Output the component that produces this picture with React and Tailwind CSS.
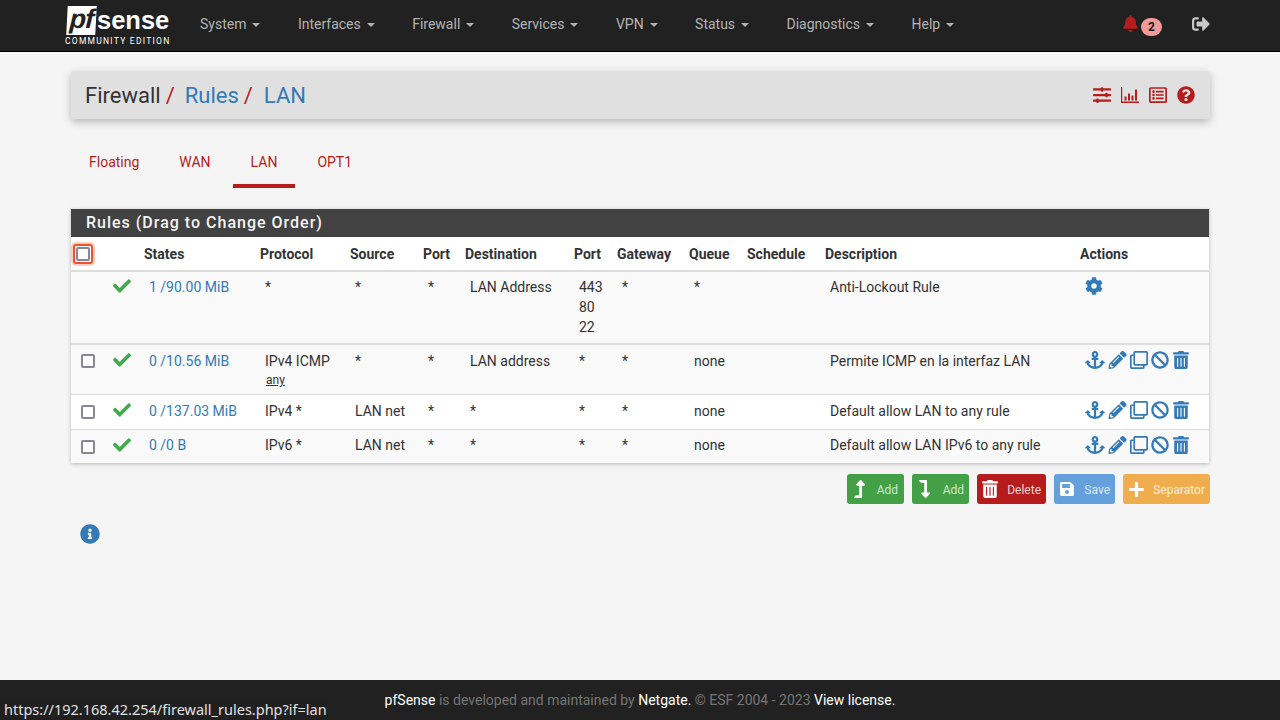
import React from 'react';
import {
  FaAnchor, FaBan, FaBell, FaCheck, FaCog, FaInfoCircle, FaLevelDownAlt, FaLevelUpAlt,
  FaPencilAlt, FaPlus, FaQuestionCircle, FaRegClone, FaRegListAlt, FaSave, FaSignOutAlt,
  FaSlidersH, FaTrashAlt,
} from 'react-icons/fa';

const menu = ['System', 'Interfaces', 'Firewall', 'Services', 'VPN', 'Status', 'Diagnostics', 'Help'];

const headers = ['', '', 'States', 'Protocol', 'Source', 'Port', 'Destination', 'Port', 'Gateway', 'Queue', 'Schedule', 'Description', 'Actions'];

const rows = [
  { states: '0 /10.56 MiB', proto: 'IPv4 ICMP', sub: 'any', src: '*', dest: 'LAN address', desc: 'Permite ICMP en la interfaz LAN', cls: 'h-[50px] bg-[#f9f9f9] border-b border-[#ddd] [&_td]:pt-[6px]', box: 'mt-[3px]', icons: '' },
  { states: '0 /137.03 MiB', proto: 'IPv4 *', src: 'LAN net', dest: '*', desc: 'Default allow LAN to any rule', cls: 'h-[35px] bg-white border-b border-[#ddd] [&_td]:pt-[6px]', box: 'mt-[4px]', icons: '' },
  { states: '0 /0 B', proto: 'IPv6 *', src: 'LAN net', dest: '*', desc: 'Default allow LAN IPv6 to any rule', cls: 'h-[34px] bg-[#f9f9f9] [&_td]:pt-[5px]', box: 'mt-[5px]', icons: 'mt-[1px]' },
];

const Check = () => <FaCheck className="ml-[1px] w-[18px] h-[18px] text-[#3fab4a]" />;

const Box = () => <span className="block w-[14px] h-[14px] rounded-[2px] border-2 border-[#8a8794] bg-white" />;

const Actions = () => (
  <div className="flex items-center gap-[3px] text-[#337ab7]">
    <FaAnchor className="w-[20px] h-[18px]" />
    <FaPencilAlt className="w-[19px] h-[18px]" />
    <FaRegClone className="w-[18px] h-[18px]" />
    <FaBan className="w-[18px] h-[18px]" />
    <FaTrashAlt className="w-[18px] h-[18px]" />
  </div>
);

const Btn = ({ icon, label, cls }) => (
  <button className={`flex items-center h-[30px] rounded-[3px] pr-[5px] text-[12px] ${cls}`}>
    {icon}
    <span className="ml-auto pt-[1px]">{label}</span>
  </button>
);

const BarChart = () => (
  <svg viewBox="0 0 18 16" className="w-[18px] h-[16px]" fill="currentColor">
    <path d="M0 0h1.2v14.6H18V16H0z" />
    <path d="M3.5 9.5h2v4h-2zM7 6.5h2v7H7zM10.5 8.5h2v5h-2zM14 2.5h2v11h-2z" />
  </svg>
);

export default function App() {
  return (
    <div className="relative h-screen flex flex-col bg-[#f5f5f5] text-[#333] text-[14px] overflow-hidden font-['Roboto',sans-serif]">
      {/* navbar */}
      <header className="h-[52px] shrink-0 bg-[#212121] border-b border-black flex items-center pl-[65px]">
        <div className="w-[105px] shrink-0 flex flex-col text-white">
          <div className="flex items-center pl-[2px] h-[30px]">
            <span className="w-[29px] h-[29px] bg-white text-[#212121] italic font-bold text-[27px] leading-[27px] text-center -skew-x-3 tracking-[-1px] font-['Liberation_Sans',sans-serif]">pf</span>
            <span className="ml-[1px] font-bold text-[25.5px] leading-[30px] font-['Liberation_Sans',sans-serif]">sense</span>
          </div>
          <div className="text-[8.5px] leading-[10px] mt-[1px] tracking-[1.25px] whitespace-nowrap">COMMUNITY EDITION</div>
        </div>
        <nav className="flex items-center gap-[37.43px] ml-[30px] pb-[2px] text-[14px] text-[#b3b3b3]">
          {menu.map((m) => (
            <span key={m} className="flex items-center gap-[6px]">
              {m}
              <span className="w-0 h-0 border-x-[4px] border-x-transparent border-t-[4px] border-t-[#b3b3b3]" />
            </span>
          ))}
        </nav>
        <div className="ml-auto flex items-center pr-[70px]">
          <FaBell className="w-[17px] h-[17px] text-[#b71c1c] -mt-[4px]" />
          <span className="ml-[2px] mt-[2px] w-[21px] h-[18px] rounded-full bg-[#f19a9a] text-[#111] text-[12px] font-bold flex items-center justify-center">2</span>
          <FaSignOutAlt className="ml-[30px] w-[18px] h-[18px] text-[#c8c8c8] -mt-[4px]" />
        </div>
      </header>

      <main className="flex-1 px-[71px] pr-[70px] pt-[19px]">
        {/* title bar */}
        <div className="h-[48px] rounded-[3px] bg-[#e0e0e0] shadow-[0_3px_8px_rgba(0,0,0,0.25)] flex items-center pl-[14px] pr-[15px] text-[22px]">
          <span className="text-[#333]">Firewall</span>
          <span className="text-[#b71c1c] ml-[5px]">/</span>
          <span className="text-[#337ab7] ml-[10px]">Rules</span>
          <span className="text-[#b71c1c] ml-[5px]">/</span>
          <span className="text-[#337ab7] ml-[11px]">LAN</span>
          <div className="ml-auto flex items-center gap-[10px] text-[#b71c1c]">
            <FaSlidersH className="w-[18px] h-[18px]" />
            <BarChart />
            <FaRegListAlt className="w-[18px] h-[18px]" />
            <FaQuestionCircle className="w-[18px] h-[18px]" />
          </div>
        </div>

        {/* tabs */}
        <div className="flex gap-[4px] mt-[21px] h-[48px] text-[#b71c1c]">
          <span className="px-[18px] pt-[12px]">Floating</span>
          <span className="px-[18px] pt-[12px]">WAN</span>
          <span className="px-[18px] pt-[12px] border-b-4 border-[#b71c1c]">LAN</span>
          <span className="px-[18px] pt-[12px]">OPT1</span>
        </div>

        {/* rules panel */}
        <section className="mt-[21px] mr-[1px] shadow-[0_1px_4px_rgba(0,0,0,0.25)]">
          <h2 className="h-[28px] bg-[#424242] text-[#f5f5f5] text-[16px] font-medium leading-[28px] pl-[15px] tracking-[1px]">Rules (Drag to Change Order)</h2>
          <table className="w-full table-fixed border-collapse">
            <colgroup>
              <col className="w-[36px]" /><col className="w-[37px]" /><col className="w-[116px]" /><col className="w-[90px]" />
              <col className="w-[73px]" /><col className="w-[42px]" /><col className="w-[109px]" /><col className="w-[43px]" />
              <col className="w-[72px]" /><col className="w-[58px]" /><col className="w-[78px]" /><col className="w-[255px]" />
              <col />
            </colgroup>
            <thead>
              <tr className="h-[34px] bg-white border-b-2 border-[#ddd]">
                <th className="relative p-0">
                  <span className="absolute left-[2px] top-[7px] w-[20px] h-[20px] rounded-[3px] border-2 border-[#e8552d] shadow-[0_0_0_2px_#fbcfc2] flex items-center justify-center">
                    <span className="block w-[14px] h-[14px] rounded-[2px] border-2 border-[#8a8794] bg-white" />
                  </span>
                </th>
                {headers.slice(1).map((h, i) => (
                  <th key={i} className="p-0 pt-[1px] text-left font-bold text-[14px]">{h}</th>
                ))}
              </tr>
            </thead>
            <tbody className="[&_td]:p-0 [&_td]:pl-[5px] [&_td]:align-top">
              <tr className="h-[73px] bg-[#f9f9f9] border-b-2 border-[#ddd] [&_td]:pt-[5px]">
                <td />
                <td><Check /></td>
                <td className="text-[#337ab7]">1 /90.00 MiB</td>
                <td>*</td>
                <td>*</td>
                <td>*</td>
                <td>LAN Address</td>
                <td className="leading-[20px]">443<br />80<br />22</td>
                <td>*</td>
                <td>*</td>
                <td />
                <td>Anti-Lockout Rule</td>
                <td><FaCog className="w-[18px] h-[18px] text-[#337ab7]" /></td>
              </tr>
              {rows.map((r) => (
                <tr key={r.desc} className={r.cls}>
                  <td><span className={`block ml-[5px] ${r.box}`}><Box /></span></td>
                  <td><div className={r.icons}><Check /></div></td>
                  <td className="text-[#337ab7]">{r.states}</td>
                  <td>
                    {r.proto}
                    {r.sub && <div className="text-[12px] leading-[16px] ml-[1px] underline">{r.sub}</div>}
                  </td>
                  <td>{r.src}</td>
                  <td>*</td>
                  <td>{r.dest}</td>
                  <td>*</td>
                  <td>*</td>
                  <td>none</td>
                  <td />
                  <td>{r.desc}</td>
                  <td><div className={r.icons}><Actions /></div></td>
                </tr>
              ))}
            </tbody>
          </table>
        </section>

        {/* buttons */}
        <div className="flex justify-end gap-[8px] mt-[11px]">
          <Btn cls="w-[57px] pl-[5px] pr-[6px] bg-[#43a047] text-[#cfe8d0]" icon={<FaLevelUpAlt className="w-[15px] h-[18px] text-white" />} label="Add" />
          <Btn cls="w-[57px] pl-[5px] bg-[#43a047] text-[#cfe8d0]" icon={<FaLevelDownAlt className="w-[15px] h-[18px] text-white" />} label="Add" />
          <Btn cls="w-[69px] pl-[5px] bg-[#b71c1c] text-[#f3d5d5]" icon={<FaTrashAlt className="w-[16px] h-[18px] text-white" />} label="Delete" />
          <Btn cls="w-[61px] pl-[5px] bg-[#64a1dc] text-[#dbe9f7]" icon={<FaSave className="w-[16px] h-[16px] text-white" />} label="Save" />
          <Btn cls="w-[87px] pl-[5px] bg-[#f0ad4e] text-[#fdeed8]" icon={<FaPlus className="w-[17px] h-[17px] text-white" />} label="Separator" />
        </div>

        <FaInfoCircle className="mt-[20px] ml-[9px] w-[20px] h-[20px] text-[#337ab7]" />
      </main>

      {/* footer */}
      <footer className="h-[40px] shrink-0 bg-[#212121] flex items-center justify-center text-[14px] text-[#757575]">
        <span><span className="text-white">pfSense</span> is developed and maintained by <span className="text-white">Netgate.</span> © ESF 2004 - 2023 <span className="text-white">View license.</span></span>
      </footer>

      {/* browser link status */}
      <div className="absolute left-0 bottom-0 h-[21px] w-[328px] pl-[4px] bg-[#202020] rounded-tr-[3px] text-[#e0e0e0] text-[14.5px] leading-[21px] whitespace-nowrap font-['Noto_Sans',sans-serif]">https://192.168.42.254/firewall_rules.php?if=lan</div>
    </div>
  );
}
